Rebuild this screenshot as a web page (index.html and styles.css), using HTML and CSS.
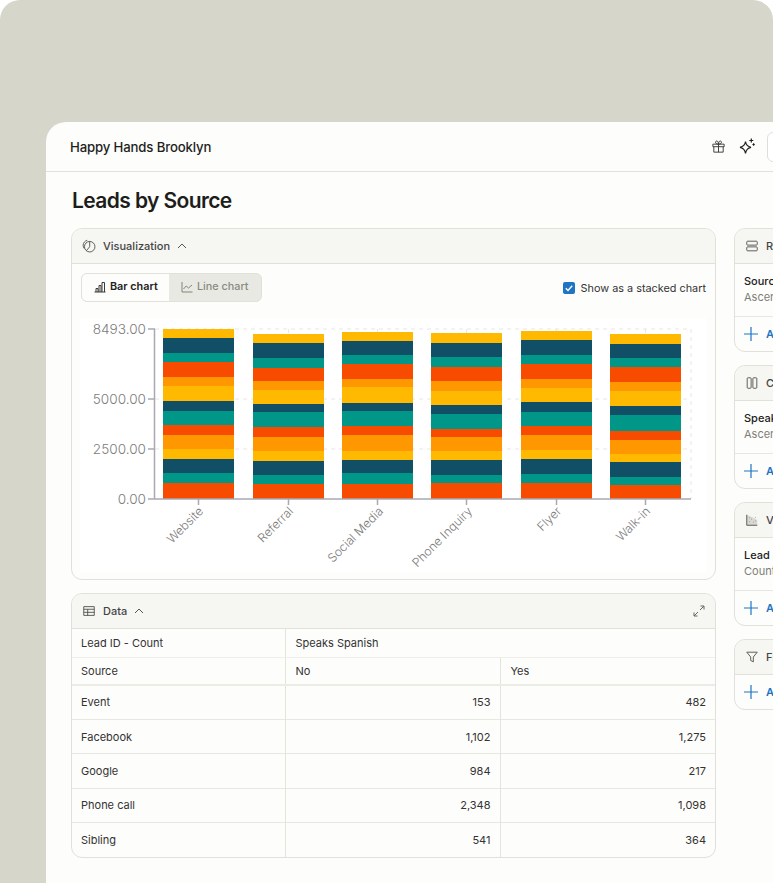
FILE: index.html
```html
<!DOCTYPE html>
<html lang="en">
<head>
<meta charset="utf-8">
<title>Leads by Source</title>
<link rel="stylesheet" href="styles.css">
</head>
<body>
<div class="frame">
  <div class="window">
    <header class="topbar">
      <span class="brand">Happy Hands Brooklyn</span>
      <div class="top-actions">
        <svg class="ico15" viewBox="0 0 16 16"><path d="M2 5.500h12v2.700H2zM3 8.200v5.800h10V8.200M8 5.500V14M8 5.500C6 5.500 4.800 4.700 4.800 3.400 4.800 2.400 6 1.700 7 2.500 7.600 3 8 4.300 8 5.500c0-1.200.4-2.500 1-3 1-.8 2.200-.1 2.200.9 0 1.300-1.200 2.100-3.200 2.100z"/></svg>
        <svg class="ico15 spark" viewBox="0 0 16 16"><path d="M6.500 3.500C7 7 8.300 8.500 12 9.300 8.300 10 7 11.500 6.500 15.500 6 11.500 4.700 10 1 9.300 4.700 8.500 6 7 6.500 3.500zM12.300.5v4M10.300 2.500h4M14.600 5.300v2.400M13.400 6.500h2.400"/></svg>
        <span class="top-btn"></span>
      </div>
    </header>
    <div class="content">
      <h1 class="title">Leads by Source</h1>
      <div class="columns">
        <div class="main-col">
          <section class="panel viz">
            <div class="panel-head">
              <svg class="ico14" viewBox="0 0 16 16"><circle cx="8.800" cy="8.800" r="6"/><path d="M8.800 2.800v6L5 13.400M6 1.500C3.500 2 1.500 4.200 1.300 7c0 1.500.4 2.700 1.200 3.800"/></svg>
              <span class="head-label">Visualization</span>
              <svg class="chev" viewBox="0 0 10 6"><path d="M1 5l4-4 4 4"/></svg>
            </div>
            <div class="toolbar">
              <div class="switch">
                <span class="tab tab-on">
                  <svg class="ico12" viewBox="0 0 12 12"><path d="M.5 11h11M2 11V7.500h2V11M5 11V4.500h2V11M8 11V1.500h2.500V11"/></svg>Bar chart
                </span>
                <span class="tab tab-off">
                  <svg class="ico12" viewBox="0 0 12 12"><path d="M1 1v10h10.500M2.500 8l2.700-3 2.300 2 3.500-3"/></svg>Line chart
                </span>
              </div>
              <label class="check">
                <span class="box"><svg viewBox="0 0 12 12"><path d="M2.800 6.200l2.200 2.200 4.200-4.600"/></svg></span>Show as a stacked chart
              </label>
            </div>
            <svg class="chart" viewBox="80 318 626 254">
              <g class="grid">
                <path d="M155 329H691M155 399H691M155 449H691M691 329V499M198.500 329V499M288.500 329V499M377.500 329V499M466.500 329V499M556.500 329V499M645.500 329V499"/>
              </g>
              <g class="bar" transform="translate(163 0)">
                <rect class="am" y="329" height="9"/><rect class="na" y="338" height="15"/><rect class="te" y="353" height="9"/><rect class="re" y="362" height="15"/><rect class="or" y="377" height="9"/><rect class="am" y="386" height="15"/><rect class="na" y="401" height="10"/><rect class="te" y="411" height="14"/><rect class="re" y="425" height="10"/><rect class="or" y="435" height="14"/><rect class="am" y="449" height="10"/><rect class="na" y="459" height="14"/><rect class="te" y="473" height="10"/><rect class="re" y="483" height="16"/>
              </g>
              <g class="bar" transform="translate(253 0)">
                <rect class="am" y="334" height="9"/><rect class="na" y="343" height="15"/><rect class="te" y="358" height="10"/><rect class="re" y="368" height="13"/><rect class="or" y="381" height="9"/><rect class="am" y="390" height="14"/><rect class="na" y="404" height="8"/><rect class="te" y="412" height="15"/><rect class="re" y="427" height="10"/><rect class="or" y="437" height="14"/><rect class="am" y="451" height="10"/><rect class="na" y="461" height="14"/><rect class="te" y="475" height="9"/><rect class="re" y="484" height="15"/>
              </g>
              <g class="bar" transform="translate(342 0)">
                <rect class="am" y="332" height="9"/><rect class="na" y="341" height="14"/><rect class="te" y="355" height="9"/><rect class="re" y="364" height="15"/><rect class="or" y="379" height="8"/><rect class="am" y="387" height="16"/><rect class="na" y="403" height="8"/><rect class="te" y="411" height="15"/><rect class="re" y="426" height="9"/><rect class="or" y="435" height="16"/><rect class="am" y="451" height="9"/><rect class="na" y="460" height="13"/><rect class="te" y="473" height="11"/><rect class="re" y="484" height="15"/>
              </g>
              <g class="bar" transform="translate(431 0)">
                <rect class="am" y="333" height="10"/><rect class="na" y="343" height="14"/><rect class="te" y="357" height="10"/><rect class="re" y="367" height="14"/><rect class="or" y="381" height="10"/><rect class="am" y="391" height="14"/><rect class="na" y="405" height="9"/><rect class="te" y="414" height="15"/><rect class="re" y="429" height="8"/><rect class="or" y="437" height="14"/><rect class="am" y="451" height="9"/><rect class="na" y="460" height="15"/><rect class="te" y="475" height="8"/><rect class="re" y="483" height="16"/>
              </g>
              <g class="bar" transform="translate(521 0)">
                <rect class="am" y="331" height="9"/><rect class="na" y="340" height="15"/><rect class="te" y="355" height="9"/><rect class="re" y="364" height="15"/><rect class="or" y="379" height="9"/><rect class="am" y="388" height="14"/><rect class="na" y="402" height="10"/><rect class="te" y="412" height="14"/><rect class="re" y="426" height="9"/><rect class="or" y="435" height="15"/><rect class="am" y="450" height="9"/><rect class="na" y="459" height="15"/><rect class="te" y="474" height="9"/><rect class="re" y="483" height="16"/>
              </g>
              <g class="bar" transform="translate(610 0)">
                <rect class="am" y="334" height="10"/><rect class="na" y="344" height="14"/><rect class="te" y="358" height="9"/><rect class="re" y="367" height="15"/><rect class="or" y="382" height="9"/><rect class="am" y="391" height="15"/><rect class="na" y="406" height="9"/><rect class="te" y="415" height="16"/><rect class="re" y="431" height="9"/><rect class="or" y="440" height="14"/><rect class="am" y="454" height="8"/><rect class="na" y="462" height="15"/><rect class="te" y="477" height="8"/><rect class="re" y="485" height="14"/>
              </g>
              <g class="axis">
                <path d="M154.500 329V499M148 329H155M148 399H155M148 449H155M148 499H691M198.500 499V505M288.500 499V505M377.500 499V505M466.500 499V505M556.500 499V505M645.500 499V505"/>
              </g>
              <g class="y-labels">
                <text x="146" y="334">8493.00</text>
                <text x="146" y="404">5000.00</text>
                <text x="146" y="454">2500.00</text>
                <text x="146" y="504">0.00</text>
              </g>
              <g class="x-labels">
                <text transform="translate(204 512) rotate(-45)">Website</text>
                <text transform="translate(294 512) rotate(-45)">Referral</text>
                <text transform="translate(384 512) rotate(-45)">Social Media</text>
                <text transform="translate(473 512) rotate(-45)">Phone Inquiry</text>
                <text transform="translate(562 512) rotate(-45)">Flyer</text>
                <text transform="translate(651 512) rotate(-45)">Walk-in</text>
              </g>
            </svg>
          </section>
          <section class="panel data">
            <div class="panel-head">
              <svg class="ico14" viewBox="0 0 16 16"><path d="M2 3h12v10H2zM2 6h12M2 9.500h12M6.500 6v7"/></svg>
              <span class="head-label">Data</span>
              <svg class="chev" viewBox="0 0 10 6"><path d="M1 5l4-4 4 4"/></svg>
              <svg class="expand" viewBox="0 0 12 12"><path d="M7 5l4-4M7.500 1H11v3.500M5 7l-4 4M4.500 11H1V7.500"/></svg>
            </div>
            <table class="pivot">
              <colgroup><col class="col-a"><col class="col-b"><col class="col-c"></colgroup>
              <thead>
                <tr class="row-h1"><th>Lead ID - Count</th><th colspan="2">Speaks Spanish</th></tr>
                <tr class="row-h2"><th>Source</th><th>No</th><th>Yes</th></tr>
              </thead>
              <tbody>
                <tr><td>Event</td><td class="num">153</td><td class="num">482</td></tr>
                <tr><td>Facebook</td><td class="num">1,102</td><td class="num">1,275</td></tr>
                <tr><td>Google</td><td class="num">984</td><td class="num">217</td></tr>
                <tr><td>Phone call</td><td class="num">2,348</td><td class="num">1,098</td></tr>
                <tr><td>Sibling</td><td class="num">541</td><td class="num">364</td></tr>
              </tbody>
            </table>
          </section>
        </div>
        <aside class="side-col">
          <section class="panel">
            <div class="panel-head">
              <svg class="ico14" viewBox="0 0 16 16"><rect x="2" y="2.500" width="12" height="4.500" rx="1"/><rect x="2" y="9" width="12" height="4.500" rx="1"/></svg>
              <span class="head-label">Rows</span>
            </div>
            <div class="field"><div class="f-name">Source</div><div class="f-sub">Ascending</div></div>
            <div class="add"><svg class="plus" viewBox="0 0 14 14"><path d="M7 0v14M0 7h14"/></svg>Add</div>
          </section>
          <section class="panel">
            <div class="panel-head">
              <svg class="ico14" viewBox="0 0 16 16"><rect x="2.500" y="2" width="4.500" height="12" rx="1"/><rect x="9" y="2" width="4.500" height="12" rx="1"/></svg>
              <span class="head-label">Columns</span>
            </div>
            <div class="field"><div class="f-name">Speaks Spanish</div><div class="f-sub">Ascending</div></div>
            <div class="add"><svg class="plus" viewBox="0 0 14 14"><path d="M7 0v14M0 7h14"/></svg>Add</div>
          </section>
          <section class="panel">
            <div class="panel-head">
              <svg class="ico14" viewBox="0 0 16 16"><path class="soft" d="M2 2v12h12V8L9 5 2 2z"/><path d="M2 2v12h12M5 10h.5M7.500 7h.5M9.500 10.500h.5M12 5h.5M12 9h.5M5 5.500h.5"/></svg>
              <span class="head-label">Values</span>
            </div>
            <div class="field"><div class="f-name">Lead ID</div><div class="f-sub">Count</div></div>
            <div class="add"><svg class="plus" viewBox="0 0 14 14"><path d="M7 0v14M0 7h14"/></svg>Add</div>
          </section>
          <section class="panel">
            <div class="panel-head">
              <svg class="ico14" viewBox="0 0 16 16"><path d="M2 2.500h12L9.500 8v5.500l-3-1.500V8z"/></svg>
              <span class="head-label">Filters</span>
            </div>
            <div class="add"><svg class="plus" viewBox="0 0 14 14"><path d="M7 0v14M0 7h14"/></svg>Add</div>
          </section>
        </aside>
      </div>
    </div>
  </div>
</div>
</body>
</html>
```

FILE: styles.css
```css
* { box-sizing: border-box; }
html, body { margin: 0; height: 100%; background: #fff; }
body { font-family: Inter, "Liberation Sans", sans-serif; color: #222; overflow: hidden; }
svg { display: block; flex: none; fill: none; stroke: #3a3a38; stroke-width: 1; }

.frame {
  height: 883px; padding: 122px 0 0 46px;
  background: #d6d6ca; border-radius: 20px 20px 0 0; overflow: hidden;
}
.window {
  width: 800px; height: 761px;
  background: #fdfdfb; border-radius: 20px 0 0 0;
}
.topbar {
  height: 50px; padding: 0 39px 0 24px;
  display: flex; align-items: center; justify-content: space-between;
  border-bottom: 1px solid #e2e2dc;
}
.brand { font-size: 13.2px; font-weight: 500; letter-spacing: -.15px; color: #1f1f1e; }
.top-actions { display: flex; align-items: center; gap: 13px; }
.ico15 { width: 15px; height: 15px; }
.spark { width: 16px; height: 16px; margin-top: -1px; stroke: #222; stroke-width: 1.2; }
.top-btn {
  width: 40px; height: 30px; margin-left: -1px;
  border: 1px solid #dfdfd9; border-radius: 6px; background: #fff;
}

.content { padding: 0 0 0 25px; }
.title {
  margin: 0; height: 56px; padding-top: 15px; padding-left: 1px;
  font-size: 21px; line-height: 27px; font-weight: 600; letter-spacing: -.6px; color: #1d1d1c;
}
.columns { display: flex; gap: 18px; align-items: flex-start; }
.main-col { width: 645px; flex: none; display: flex; flex-direction: column; gap: 13px; }
.side-col { width: 200px; flex: none; display: flex; flex-direction: column; gap: 13px; }

.panel {
  border: 1px solid #e1e1da; border-radius: 11px; background: #fdfdfb; overflow: hidden;
}
.panel-head {
  height: 35px; padding: 0 9px 0 10px; display: flex; align-items: center; gap: 7px;
  background: #f6f6f2; border-bottom: 1px solid #e1e1da;
}
.ico14 { width: 14px; height: 14px; stroke: #4a4a47; }
.soft { fill: #d9d9d2; stroke: none; }
.head-label { font-size: 11px; font-weight: 500; color: #444; }
.chev { width: 10px; height: 6px; stroke: #555; }
.expand { width: 12px; height: 12px; margin-left: auto; margin-right: 1px; stroke: #666; }

.toolbar {
  height: 54px; padding: 9px 9px 0 9px;
  display: flex; justify-content: space-between; align-items: flex-start;
}
.switch {
  display: flex; height: 29px; border: 1px solid #e1e1da; border-radius: 6px;
  background: #e9e9e3; overflow: hidden;
}
.tab { display: flex; align-items: center; gap: 4px; font-size: 10.8px; padding: 0 0 2px 12px; font-weight: 500; white-space: nowrap; }
.tab-on { width: 87px; background: #fdfdfb; color: #222; font-weight: 600; }
.tab-off { width: 92px; color: #8a8a84; }
.tab-off .ico12 { stroke: #85857f; }
.ico12 { width: 12px; height: 12px; }
.check { display: flex; align-items: center; gap: 6px; height: 29px; font-size: 10.85px; color: #333; white-space: nowrap; }
.box { width: 12px; height: 12px; border-radius: 2px; background: #1f74c4; }
.box svg { width: 12px; height: 12px; stroke: #fff; stroke-width: 1.4; }

.chart { width: 626px; height: 254px; margin: 0 0 7px 8px; background: #fff; }
.grid path { stroke: #e7e7e3; stroke-dasharray: 4 4; }
.axis path { stroke: #a9a9b2; stroke-width: 1.5; }
.bar rect { width: 71px; stroke: none; }
.am { fill: #ffb900; }
.na { fill: #114f66; }
.te { fill: #009688; }
.re { fill: #f74b00; }
.or { fill: #ff9800; }
.y-labels text { font-size: 13.6px; font-weight: 300; fill: #7c7c7c; stroke: none; text-anchor: end; }
.x-labels text { font-size: 12.2px; font-weight: 300; fill: #7c7c7c; stroke: none; text-anchor: end; }

.pivot { width: 100%; border-collapse: collapse; table-layout: fixed; font-size: 11px; color: #333; }
.col-a { width: 213px; }
.col-b { width: 215px; }
.pivot th { font-weight: 400; text-align: left; }
.pivot th, .pivot td { padding: 0 9px; }
.pivot th:not(:first-child), .pivot td:not(:first-child) { border-left: 1px solid #e4e4dd; padding-left: 10px; }
.row-h1 { height: 28px; }
.row-h1 th { border-bottom: 1px solid #efefea; }
.row-h2 { height: 28px; }
.row-h2 th { border-bottom: 2px solid #ecece6; }
.pivot tbody tr { height: 34.4px; }
.pivot tbody tr + tr td { border-top: 1px solid #e8e8e2; }
.pivot td.num { text-align: right; }

.field { height: 53px; padding: 10px 9px 0; border-bottom: 1px solid #e8e8e2; }
.f-name { font-size: 11px; font-weight: 500; line-height: 15px; color: #222; }
.f-sub { font-size: 11px; line-height: 17px; color: #7d7d78; }
.add { height: 34px; padding: 0 9px; display: flex; align-items: center; gap: 8px; font-size: 11px; font-weight: 600; color: #1f74c4; }
.plus { width: 14px; height: 14px; stroke: #1f74c4; stroke-width: 1.2; }
```
